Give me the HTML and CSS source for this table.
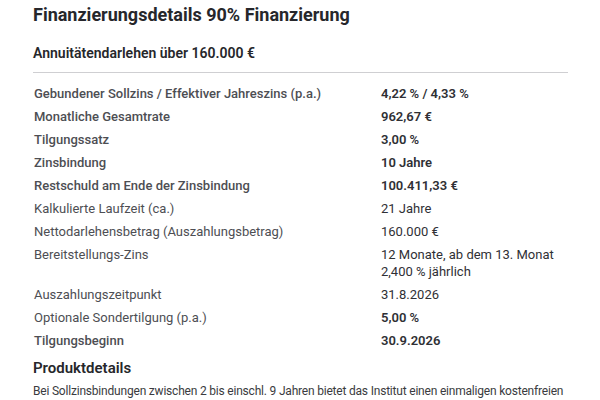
FILE: index.html
```html
<!DOCTYPE html>
<html lang="de">
<head>
<meta charset="utf-8">
<link rel="stylesheet" href="styles.css">
</head>
<body>
<main class="page">
  <h1 class="title">Finanzierungsdetails 90% Finanzierung</h1>
  <h2 class="subtitle">Annuitätendarlehen über 160.000 €</h2>
  <hr class="rule">
  <dl class="details">
    <dt class="strong">Gebundener Sollzins / Effektiver Jahreszins (p.a.)</dt>
    <dd class="strong">4,22 % / 4,33 %</dd>
    <dt class="strong">Monatliche Gesamtrate</dt>
    <dd class="strong">962,67 €</dd>
    <dt class="strong">Tilgungssatz</dt>
    <dd class="strong">3,00 %</dd>
    <dt class="strong">Zinsbindung</dt>
    <dd class="strong">10 Jahre</dd>
    <dt class="strong">Restschuld am Ende der Zinsbindung</dt>
    <dd class="strong">100.411,33 €</dd>
    <dt>Kalkulierte Laufzeit (ca.)</dt>
    <dd>21 Jahre</dd>
    <dt>Nettodarlehensbetrag (Auszahlungsbetrag)</dt>
    <dd>160.000 €</dd>
    <dt>Bereitstellungs-Zins</dt>
    <dd>12 Monate, ab dem 13. Monat<br>2,400 % jährlich</dd>
    <dt>Auszahlungszeitpunkt</dt>
    <dd>31.8.2026</dd>
    <dt>Optionale Sondertilgung (p.a.)</dt>
    <dd class="strong">5,00 %</dd>
    <dt class="strong">Tilgungsbeginn</dt>
    <dd class="strong">30.9.2026</dd>
  </dl>
  <h3 class="section">Produktdetails</h3>
  <p class="text">Bei Sollzinsbindungen zwischen 2 bis einschl. 9 Jahren bietet das Institut einen einmaligen kostenfreien</p>
</main>
</body>
</html>
```

FILE: styles.css
```css
* { box-sizing: border-box; }
html, body { margin: 0; padding: 0; background: #fff; }
body {
  font-family: Roboto, "Liberation Sans", Arial, sans-serif;
  color: #2f3035;
  overflow: hidden;
}
.page {
  width: 535px;
  margin-left: 33px;
  padding-top: 3px;
}
.title {
  margin: 0;
  font-size: 18px;
  line-height: 24px;
  font-weight: 700;
  color: #26272b;
}
.subtitle {
  margin: 16px 0 0;
  font-size: 14px;
  line-height: 20px;
  font-weight: 600;
  color: #26272b;
}
.rule {
  margin: 9px 0 0;
  border: 0;
  height: 1px;
  background: #cfcfd2;
}
.details {
  margin: 9px 0 0;
  display: grid;
  grid-template-columns: 348px 1fr;
  font-size: 13px;
  line-height: 17px;
}
.details dt, .details dd {
  margin: 0;
  padding: 3px 0;
  font-weight: 400;
}
.details dt { color: #4d4e53; padding-left: 1px; }
.details dd { color: #2f3035; }
.details dt.strong { font-weight: 500; }
.details dd.strong { font-weight: 600; }
.section {
  margin: 6px 0 0;
  font-size: 15px;
  line-height: 20px;
  font-weight: 600;
  color: #26272b;
}
.text {
  margin: 4px 0 0;
  width: 560px;
  font-size: 12px;
  letter-spacing: -0.2px;
  line-height: 18px;
  color: #3a3b40;
}
```
